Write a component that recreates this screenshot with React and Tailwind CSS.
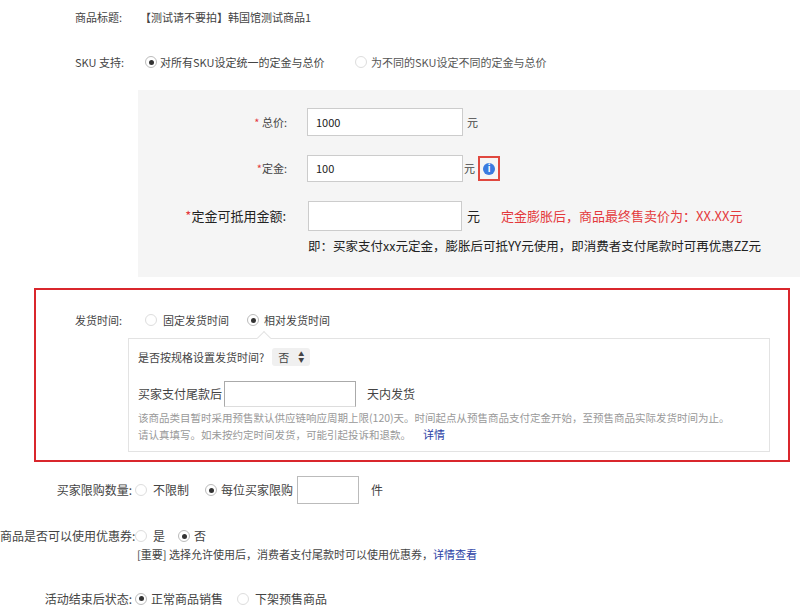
const R = ({ on }) => (
  <span className={"inline-flex items-center justify-center w-[12px] h-[12px] rounded-full border bg-white shrink-0 " + (on ? "border-[#bbb]" : "border-[#ddd]")}>
    {on && <span className="w-[5px] h-[5px] rounded-full bg-[#333]" />}
  </span>
);

export default function App() {
  return (
    <div className="w-[800px] h-[616px] bg-white overflow-hidden text-[11px] text-[#444] relative" style={{ fontFamily: '"Noto Sans CJK SC", "Liberation Sans", sans-serif' }}>
      <div className="flex items-center h-[16px] mt-[9px] pl-[75px]">
        <span className="w-[65px]">商品标题:</span>
        <span>【测试请不要拍】韩国馆测试商品1</span>
      </div>
      <div className="flex items-center h-[16px] mt-[29px] pl-[75px]">
        <span className="w-[70px]">SKU 支持:</span>
        <R on />
        <span className="ml-[3px] w-[195px]">对所有SKU设定统一的定金与总价</span>
        <R />
        <span className="ml-[4px] text-[#555]">为不同的SKU设定不同的定金与总价</span>
      </div>
      <div className="ml-[138px] mt-[20px] h-[187px] bg-[#f5f5f5] pt-[18px]">
        <div className="flex items-center h-[28px]">
          <span className="w-[169px] text-right pr-[20px]"><span className="text-[#e4393c]">* </span>总价:</span>
          <div className="w-[156px] h-[28px] bg-white border border-[#ccc] flex items-center pl-[8px] text-[#222]">1000</div>
          <span className="ml-[4px]">元</span>
        </div>
        <div className="flex items-center h-[27px] mt-[19px]">
          <span className="w-[169px] text-right pr-[20px]"><span className="text-[#e4393c]">*</span>定金:</span>
          <div className="w-[156px] h-[27px] bg-white border border-[#ccc] flex items-center pl-[8px] text-[#222]">100</div>
          <span className="ml-[1px]">元</span>
          <span className="ml-[3px] w-[22px] h-[25px] border-2 border-[#e0483f] flex items-center justify-center">
            <span className="w-[12px] h-[12px] rounded-full bg-[#3a7be0] text-white text-[9px] leading-none flex items-center justify-center font-bold">i</span>
          </span>
        </div>
        <div className="flex items-center h-[30px] mt-[19px] text-[13px] text-[#222]">
          <span className="w-[170px] text-right pr-[22px]"><span className="text-[#e4393c]">*</span>定金可抵用金额:</span>
          <div className="w-[154px] h-[30px] bg-white border border-[#ccc]" />
          <span className="ml-[5px] w-[34px]">元</span>
          <span className="text-[#e4393c]">定金膨胀后，商品最终售卖价为：XX.XX元</span>
        </div>
        <div className="ml-[170px] mt-[6px] text-[12.5px] text-[#222] whitespace-nowrap">即：买家支付xx元定金，膨胀后可抵YY元使用，即消费者支付尾款时可再优惠ZZ元</div>
      </div>
      <div className="ml-[34px] mt-[11px] w-[756px] h-[174px] border-2 border-[#d9262c] pt-[22px]">
        <div className="flex items-center h-[16px] pl-[39px]">
          <span className="w-[70px]">发货时间:</span>
          <R />
          <span className="ml-[6px] w-[84px]">固定发货时间</span>
          <R on />
          <span className="ml-[5px]">相对发货时间</span>
        </div>
        <div className="relative ml-[92px] mt-[10px] w-[642px] h-[114px] border border-[#e3e3e3] pl-[9px] pt-[9px]">
          <span className="absolute -top-[6px] left-[130px] w-[10px] h-[10px] bg-white border-l border-t border-[#e3e3e3] rotate-45" />
          <div className="flex items-center h-[18px]">
            <span>是否按规格设置发货时间?</span>
            <span className="ml-[8px] w-[38px] h-[18px] bg-[#f0f0f0] rounded-[3px] flex items-center justify-between px-[6px]">否<span className="text-[6px] leading-[6px] flex flex-col"><span>▲</span><span>▼</span></span></span>
          </div>
          <div className="flex items-center h-[26px] mt-[15px] text-[12px]">
            <span className="w-[86px]">买家支付尾款后</span>
            <div className="w-[132px] h-[26px] border border-[#aaa] border-b-[#ddd]" />
            <span className="ml-[11px]">天内发货</span>
          </div>
          <div className="mt-[3px] text-[10.5px] text-[#999] leading-[16px] whitespace-nowrap">
            <div>该商品类目暂时采用预售默认供应链响应周期上限(120)天。时间起点从预售商品支付定金开始，至预售商品实际发货时间为止。</div>
            <div>请认真填写。如未按约定时间发货，可能引起投诉和退款。<span className="ml-[12px] text-[#2b3fa6] text-[11px]">详情</span></div>
          </div>
        </div>
      </div>
      <div className="flex items-center h-[28px] mt-[14px] text-[12px]">
        <span className="w-[135px] text-right pr-[3px]">买家限购数量:</span>
        <R />
        <span className="ml-[6px] w-[52px]">不限制</span>
        <R on />
        <span className="ml-[4px] w-[76px]">每位买家限购</span>
        <div className="w-[62px] h-[28px] border border-[#bbb]" />
        <span className="ml-[12px]">件</span>
      </div>
      <div className="flex items-center h-[16px] mt-[24px] text-[12px]">
        <span className="w-[135px] text-right pr-[3px] whitespace-nowrap">商品是否可以使用优惠券:</span>
        <R />
        <span className="ml-[6px] w-[25px]">是</span>
        <R on />
        <span className="ml-[4px]">否</span>
      </div>
      <div className="ml-[137px] mt-[2px] text-[11px]">[重要] 选择允许使用后，消费者支付尾款时可以使用优惠券，<span className="text-[#2b3fa6]">详情查看</span></div>
      <div className="flex items-center h-[16px] mt-[28px] text-[12px]">
        <span className="w-[135px] text-right pr-[3px]">活动结束后状态:</span>
        <R on />
        <span className="ml-[4px] w-[86px]">正常商品销售</span>
        <R />
        <span className="ml-[6px]">下架预售商品</span>
      </div>
    </div>
  );
}
